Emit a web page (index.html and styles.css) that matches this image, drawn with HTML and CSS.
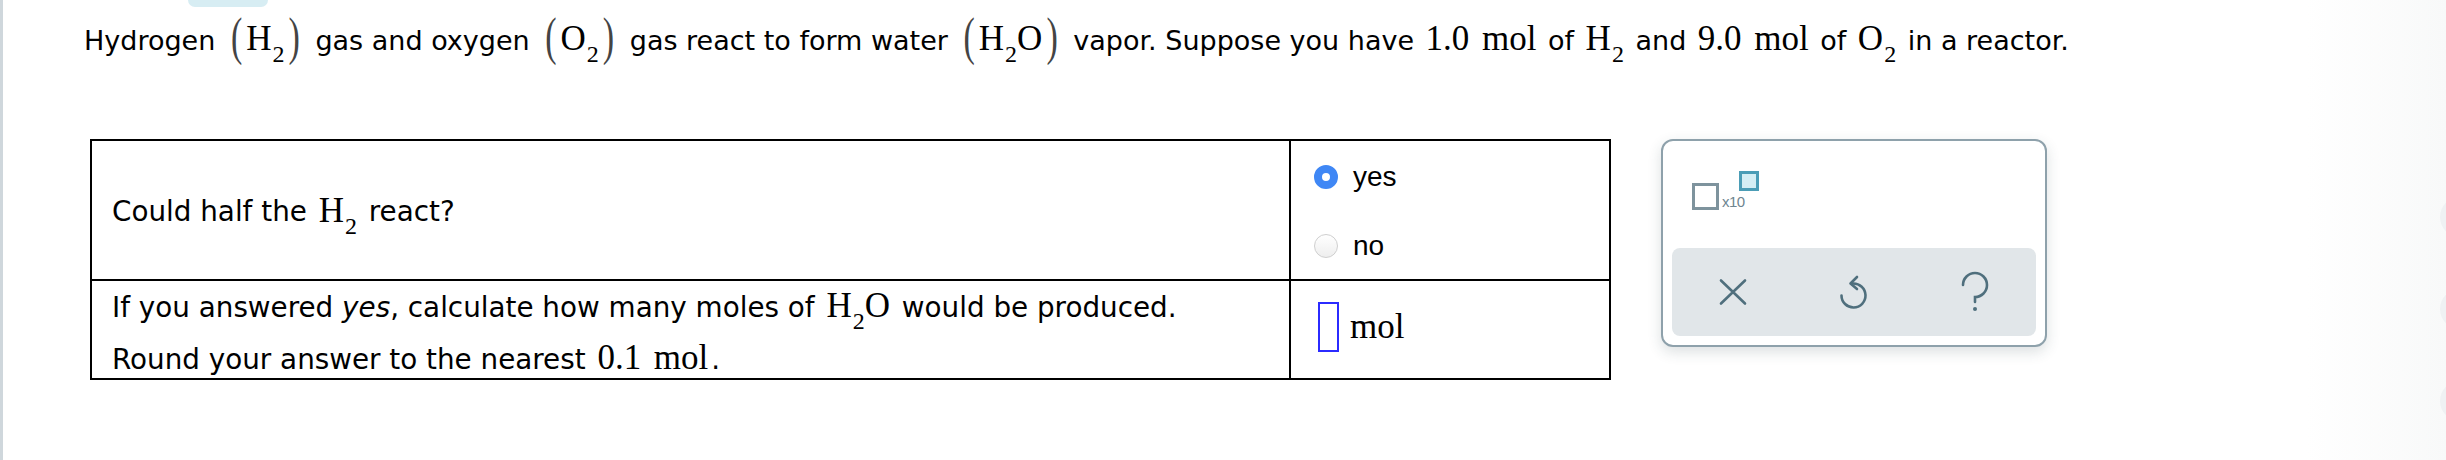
FILE: index.html
```html
<!DOCTYPE html>
<html lang="en">
<head>
<meta charset="utf-8">
<title>Hydrogen and oxygen</title>
<link rel="stylesheet" href="styles.css">
</head>
<body>
<div class="page">
  <div class="strip"></div>
  <main class="main">
    <div class="tab"></div>
    <p class="prompt">Hydrogen <span class="m"><span class="paren">(</span>H<sub>2</sub><span class="paren">)</span></span> gas and oxygen <span class="m"><span class="paren">(</span>O<sub>2</sub><span class="paren">)</span></span> gas react to form water <span class="m"><span class="paren">(</span>H<sub>2</sub>O<span class="paren">)</span></span> vapor. Suppose you have <span class="m">1.0<span class="sp"></span>mol</span> of <span class="m">H<sub>2</sub></span> and <span class="m">9.0<span class="sp"></span>mol</span> of <span class="m">O<sub>2</sub></span> in a reactor.</p>
    <div class="work">
      <div class="qtable">
        <div class="cell q q1">Could half the <span class="m">H<sub>2</sub></span> react?</div>
        <div class="cell a a1">
          <label class="opt"><span class="radio on"></span><span class="optlabel">yes</span></label>
          <label class="opt"><span class="radio"></span><span class="optlabel">no</span></label>
        </div>
        <div class="cell q q2">
          <div>If you answered <i>yes</i>, calculate how many moles of <span class="m">H<sub>2</sub>O</span> would be produced.</div>
          <div>Round your answer to the nearest <span class="m">0.1<span class="sp"></span>mol</span>.</div>
        </div>
        <div class="cell a a2"><span class="inbox"></span><span class="unit">mol</span></div>
      </div>
      <div class="panel">
        <div class="tools">
          <span class="sq"></span><span class="x10">x10</span><span class="supsq"></span>
        </div>
        <div class="bar">
          <span class="btn"><svg width="30" height="30" viewBox="-15 -15 30 30"><path d="M-12,-11.5 L12,11.5 M12,-11.5 L-12,11.5" fill="none" stroke="#4f6f7d" stroke-width="2.6" stroke-linecap="round"/></svg></span>
          <span class="btn"><svg width="34" height="40" viewBox="-17 -20 34 40"><path d="M-1,-8.5 A12 12 0 1 1 -12.5,3.5" fill="none" stroke="#4f6f7d" stroke-width="2.6" stroke-linecap="round"/><path d="M3,-15 L-3.5,-8.5 L3,-3" fill="none" stroke="#4f6f7d" stroke-width="2.6" stroke-linecap="round" stroke-linejoin="round"/></svg></span>
          <span class="btn"><svg width="30" height="44" viewBox="-15 -22 30 44"><path d="M-12,-7 A12 12 0 1 1 0,5 L0,10" fill="none" stroke="#4f6f7d" stroke-width="2.6" stroke-linecap="round"/><circle cx="0" cy="17" r="2" fill="#4f6f7d"/></svg></span>
        </div>
      </div>
    </div>
  </main>
  <aside class="side"><span class="dot"></span><span class="dot"></span><span class="dot"></span></aside>
</div>
</body>
</html>
```
FILE: styles.css
```css
html, body {
  margin: 0;
  padding: 0;
  background: #fff;
  overflow: hidden;
}
.page {
  display: flex;
  height: 460px;
  font-family: "DejaVu Sans", Verdana, sans-serif;
  font-size: 27px;
  color: #000;
}
.strip {
  width: 3px;
  background: #cfd7dc;
  flex: none;
}
.main {
  flex: 1;
  min-width: 0;
}
.tab {
  margin-left: 185px;
  width: 80px;
  height: 7px;
  background: #d7edf3;
  border-radius: 0 0 14px 14px;
}
.prompt {
  margin: 4px 0 0 81px;
  height: 56px;
  line-height: 56px;
  white-space: nowrap;
}
.m {
  font-family: "Liberation Serif", "Times New Roman", serif;
  font-size: 35px;
  margin: 0 3px;
}
.sp {
  display: inline-block;
  width: 0.36em;
}
.m sub {
  font-size: 24px;
  vertical-align: -12px;
  line-height: 0;
  margin-left: 1px;
}
.paren {
  display: inline-block;
  font-size: 34px;
  line-height: 34px;
  color: #444;
  transform: scaleY(1.55);
  transform-origin: 50% 62%;
  margin: 0 4px;
}
.work {
  display: flex;
  align-items: flex-start;
  margin: 72px 0 0 87px;
}
.qtable {
  display: grid;
  grid-template-columns: 1199px 318px;
  grid-template-rows: 140px 97px;
  border: 2px solid #000;
  flex: none;
}
.cell {
  box-sizing: border-box;
}
.q {
  border-right: 2px solid #000;
  padding-left: 20px;
  font-size: 27.8px;
}
.q1, .a1 {
  border-bottom: 2px solid #000;
}
.q1 {
  display: flex;
  align-items: center;
  white-space: pre;
  padding-top: 2px;
}
.q2 {
  line-height: 50px;
  white-space: nowrap;
}
.a1 {
  display: flex;
  flex-direction: column;
  gap: 5px;
  padding: 4px 0 0 23px;
}
.opt {
  display: flex;
  align-items: center;
  height: 64px;
  font-family: "Liberation Sans", Arial, sans-serif;
  font-size: 28px;
}
.radio {
  box-sizing: border-box;
  width: 24px;
  height: 24px;
  border-radius: 50%;
  border: 1px solid #cfcfcf;
  background: linear-gradient(#fff, #eee);
  margin-right: 15px;
  flex: none;
}
.radio.on {
  border: 8px solid #3f87f5;
  background: #fff;
}
.a2 {
  display: flex;
  align-items: center;
  padding: 0 0 5px 27px;
}
.inbox {
  box-sizing: border-box;
  width: 21px;
  height: 50px;
  border: 2px solid #2b2bff;
  margin-right: 11px;
}
.unit {
  font-family: "Liberation Serif", "Times New Roman", serif;
  font-size: 35px;
}
.panel {
  box-sizing: border-box;
  width: 386px;
  height: 208px;
  margin-left: 50px;
  border: 2px solid #8ea1ab;
  border-radius: 12px;
  padding: 9px;
  display: flex;
  flex-direction: column;
  box-shadow: 0 5px 14px rgba(40, 60, 70, 0.16);
  background: #fff;
}
.tools {
  height: 98px;
  box-sizing: border-box;
  padding: 21px 0 0 20px;
  display: flex;
  align-items: flex-start;
}
.sq {
  box-sizing: border-box;
  width: 27px;
  height: 27px;
  border: 3px solid #7e939d;
  margin-top: 12px;
}
.x10 {
  font-family: "Liberation Sans", Arial, sans-serif;
  font-size: 15px;
  color: #6e8590;
  margin: 22px 0 0 3px;
  letter-spacing: -0.5px;
}
.supsq {
  box-sizing: border-box;
  width: 20px;
  height: 20px;
  border: 3px solid #4b9db6;
  background: #d5eef4;
  margin-left: -6px;
}
.bar {
  flex: 1;
  display: flex;
  background: #e1e6e9;
  border-radius: 8px;
}
.btn {
  flex: 1;
  display: flex;
  align-items: center;
  justify-content: center;
}
.side {
  width: 140px;
  flex: none;
  background: linear-gradient(to right, #fff, #f8f9f9);
  display: flex;
  flex-direction: column;
  align-items: flex-end;
  gap: 52px;
  padding-top: 197px;
  overflow: hidden;
}
.dot {
  width: 40px;
  height: 40px;
  border-radius: 50%;
  background: #eff1f3;
  margin-right: -34px;
  flex: none;
}
```
